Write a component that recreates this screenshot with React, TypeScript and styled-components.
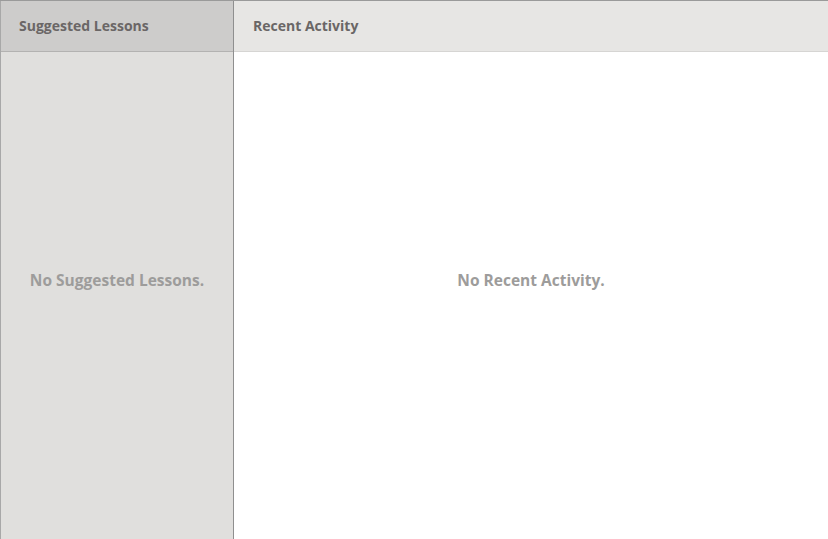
import React from "react";
import styled, { createGlobalStyle } from "styled-components";

const Global = createGlobalStyle`
  html, body { margin: 0; padding: 0; height: 100%; background: #ffffff; }
  #root { height: 100%; }
  * { box-sizing: border-box; }
`;

const Page = styled.div`
  display: grid;
  grid-template-columns: 234px 1fr;
  height: 539px;
  width: 828px;
  border-top: 1px solid #9a9a9a;
  font-family: "Open Sans", Lato, sans-serif;
`;

const Column = styled.section<{ $side?: boolean }>`
  display: flex;
  flex-direction: column;
  background: ${(p) => (p.$side ? "#e0dfdd" : "#ffffff")};
  ${(p) =>
    p.$side
      ? "border-left: 1px solid #a8a8a8; border-right: 1px solid #8f8f8f;"
      : ""}
  min-height: 0;
`;

const Header = styled.header<{ $side?: boolean }>`
  height: 51px;
  flex: none;
  display: flex;
  align-items: center;
  padding-left: ${(p) => (p.$side ? "18px" : "19px")};
  background: ${(p) => (p.$side ? "#cdcccb" : "#e7e6e4")};
  border-bottom: 1px solid ${(p) => (p.$side ? "#b3b2b1" : "#d6d5d3")};
  color: #6a6666;
  font-weight: 700;
  font-size: 14px;
  padding-bottom: 1px;
`;

const Empty = styled.div`
  flex: 1;
  display: flex;
  align-items: center;
  justify-content: center;
  color: #9d9c9b;
  font-weight: 700;
  font-size: 15.5px;
  padding-bottom: 31px;
`;

export default function App() {
  return (
    <>
      <Global />
      <Page>
        <Column $side>
          <Header $side>Suggested Lessons</Header>
          <Empty>No Suggested Lessons.</Empty>
        </Column>
        <Column>
          <Header>Recent Activity</Header>
          <Empty>No Recent Activity.</Empty>
        </Column>
      </Page>
    </>
  );
}
